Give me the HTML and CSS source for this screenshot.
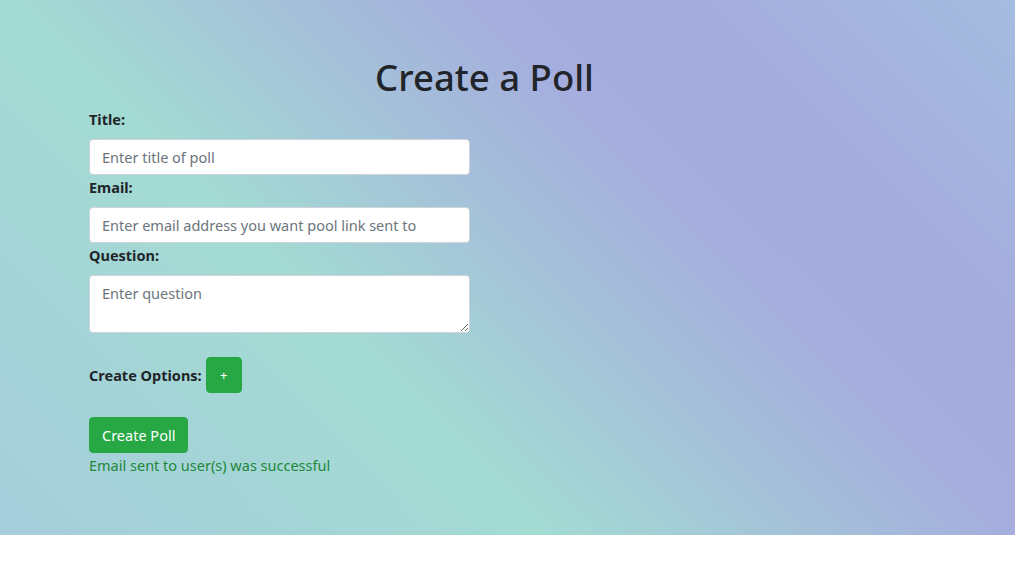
FILE: index.html
```html
<!DOCTYPE html>
<html lang="en">
<head>
<meta charset="utf-8">
<title>Create a Poll</title>
<link rel="stylesheet" href="styles.css">
</head>
<body>
<main class="hero">
  <div class="container">
    <h1 class="page-title">Create a Poll</h1>
    <form class="poll-form">
      <div class="field">
        <label class="field-label" for="title">Title:</label>
        <input class="control" id="title" type="text" placeholder="Enter title of poll">
      </div>
      <div class="field">
        <label class="field-label" for="email">Email:</label>
        <input class="control" id="email" type="text" placeholder="Enter email address you want pool link sent to">
      </div>
      <div class="field">
        <label class="field-label" for="question">Question:</label>
        <textarea class="control area" id="question" placeholder="Enter question"></textarea>
      </div>
      <div class="options-row">
        <span class="field-label inline">Create Options:</span>
        <button type="button" class="btn btn-add">+</button>
      </div>
      <div class="submit-row">
        <button type="button" class="btn btn-submit">Create Poll</button>
      </div>
      <p class="status">Email sent to user(s) was successful</p>
    </form>
  </div>
</main>
</body>
</html>
```

FILE: styles.css
```css
* { box-sizing: border-box; }

html, body {
  margin: 0;
  padding: 0;
  background: #ffffff;
}

body {
  font-family: "Noto Sans", "Open Sans", sans-serif;
  font-size: 14.5px;
  line-height: 24px;
  color: #212529;
}

.hero {
  height: 535px;
  background: linear-gradient(45deg,
    #a6cedb 0%,
    #a6cedb 2%,
    #a3dbd3 35%,
    #a5adde 66%,
    #a5acdd 79%,
    #a4bde0 100%);
  overflow: hidden;
}

.container {
  margin-left: 89px;
  width: 791px;
}

.page-title {
  margin: 53px 0 6px;
  font-size: 36.5px;
  line-height: 48px;
  font-weight: 500;
  text-align: center;
  color: #212529;
}

.poll-form {
  width: 381px;
}

.field {
  display: flex;
  flex-direction: column;
}

.field-label {
  font-weight: 700;
  margin-bottom: 8px;
  color: #212529;
}

.field-label.inline {
  margin: 0 4px 0 0;
}

.control {
  width: 381px;
  height: 36px;
  padding: 6px 12px;
  border: 1px solid #ced4da;
  border-radius: 4px;
  background: #ffffff;
  font-family: inherit;
  font-size: 14.5px;
  line-height: 24px;
  color: #495057;
}

.control::placeholder {
  color: #6c757d;
  opacity: 1;
}

.area {
  height: 58px;
  resize: vertical;
  display: block;
  padding-top: 5px;
}

.options-row {
  display: flex;
  align-items: center;
  margin-top: 24px;
}

.btn {
  height: 36px;
  border: 1px solid #28a745;
  border-radius: 4px;
  background: #28a745;
  color: #ffffff;
  font-family: inherit;
  line-height: 24px;
  cursor: pointer;
}

.btn-add {
  width: 36px;
  padding: 0;
  font-size: 13px;
}

.submit-row {
  margin-top: 24px;
}

.btn-submit {
  padding: 5px 12px;
  font-size: 14.5px;
}

.status {
  margin: 0;
  color: #218838;
}
```
